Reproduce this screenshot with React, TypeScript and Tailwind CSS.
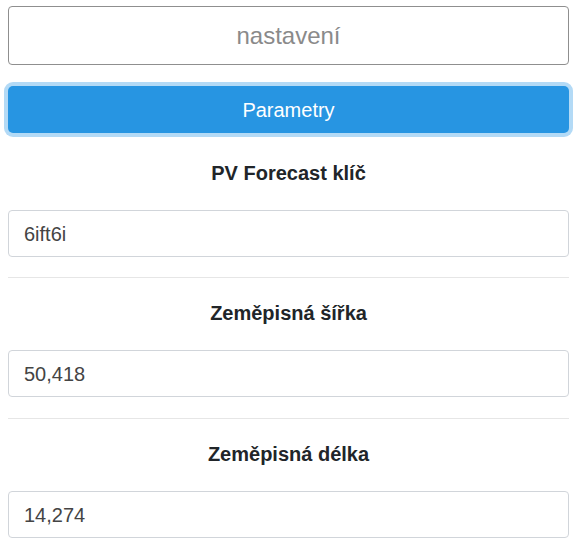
const fields = [
  { label: "PV Forecast klíč", value: "6ift6i" },
  { label: "Zeměpisná šířka", value: "50,418" },
  { label: "Zeměpisná délka", value: "14,274" },
];

export default function App() {
  return (
    <div className="min-h-screen w-full bg-white px-2 font-['Liberation_Sans',Arial,sans-serif]">
      <div className="mt-[6px] flex h-[59px] items-center justify-center rounded border border-[#8f8f8f] text-[24px] text-[#8a8a8a]">
        nastavení
      </div>
      <button className="mt-[21px] flex h-[47px] w-full items-center justify-center rounded-[5px] bg-[#2795e2] text-[20px] text-white shadow-[0_0_0_4px_#b3daf6]">
        Parametry
      </button>
      {fields.map((f, i) => (
        <div key={f.label}>
          {i > 0 && (
            <div className={`${i === 2 ? "mt-[21px]" : "mt-5"} h-px bg-[#e6e6e6]`} />
          )}
          <div
            className={`${i === 0 ? "mt-[26px]" : "mt-[21px]"} h-[28px] text-center text-[20px] font-bold leading-[28px] text-[#212529]`}
          >
            {f.label}
          </div>
          <div className="mt-[23px] flex h-[47px] items-center rounded border border-[#d1d5da] pl-[15px] text-[20px] text-[#444]">
            {f.value}
          </div>
        </div>
      ))}
    </div>
  );
}
